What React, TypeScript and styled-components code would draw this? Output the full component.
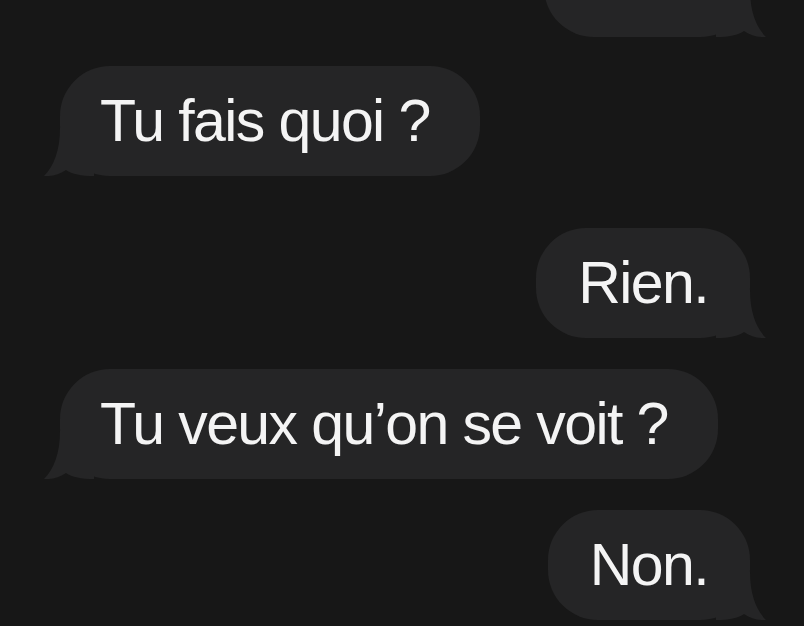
import styled, { createGlobalStyle } from "styled-components";

const GlobalStyle = createGlobalStyle`
  html, body {
    margin: 0;
    padding: 0;
    background: #171717;
  }
  body {
    font-family: "Liberation Sans", Arial, sans-serif;
    overflow: hidden;
  }
`;

const Thread = styled.div`
  display: flex;
  flex-direction: column;
  width: 804px;
  height: 626px;
  padding: 0 54px 0 60px;
  box-sizing: border-box;
  overflow: hidden;
  background: #171717;
`;

const Row = styled.div<{ $side: "left" | "right"; $gap: number }>`
  display: flex;
  justify-content: ${(p) => (p.$side === "left" ? "flex-start" : "flex-end")};
  margin-top: ${(p) => p.$gap}px;
`;

const Bubble = styled.div<{ $side: "left" | "right"; $width?: number }>`
  position: relative;
  box-sizing: border-box;
  ${(p) => (p.$width ? `width: ${p.$width}px;` : "")}
  padding: ${(p) => (p.$side === "left" ? "20px 50px 20px 40px" : "20px 42px")};
  border-radius: 50px;
  background: #252526;
  color: #f4f4f4;
  font-size: 59px;
  line-height: 70px;
  letter-spacing: -1.6px;
  white-space: nowrap;
`;

// la petite queue de la bulle, en bas du côté de l'expéditeur
const TailSvg = styled.svg<{ $side: "left" | "right" }>`
  position: absolute;
  bottom: 0;
  width: 50px;
  height: 48px;
  ${(p) =>
    p.$side === "left"
      ? "left: -16px; transform: scaleX(-1);"
      : "right: -16px;"}
`;

function Tail({ side }: { side: "left" | "right" }) {
  return (
    <TailSvg $side={side} viewBox="0 0 50 48">
      <path
        d="M0 0 L34 0 C34 22 40 38 50 48 C42 48.5 35 46.5 28 42 C22 46 13 48 0 48 Z"
        fill="#252526"
      />
    </TailSvg>
  );
}

type Message = {
  side: "left" | "right";
  gap: number;
  text: string;
  width?: number;
};

const messages: Message[] = [
  { side: "right", gap: -73, text: "\u00a0", width: 206 },
  { side: "left", gap: 29, text: "Tu fais quoi ?" },
  { side: "right", gap: 52, text: "Rien." },
  { side: "left", gap: 31, text: "Tu veux qu’on se voit ?" },
  { side: "right", gap: 31, text: "Non." },
];

export default function App() {
  return (
    <>
      <GlobalStyle />
      <Thread>
        {messages.map((m, i) => (
          <Row key={i} $side={m.side} $gap={m.gap}>
            <Bubble $side={m.side} $width={m.width}>
              {m.text}
              <Tail side={m.side} />
            </Bubble>
          </Row>
        ))}
      </Thread>
    </>
  );
}
